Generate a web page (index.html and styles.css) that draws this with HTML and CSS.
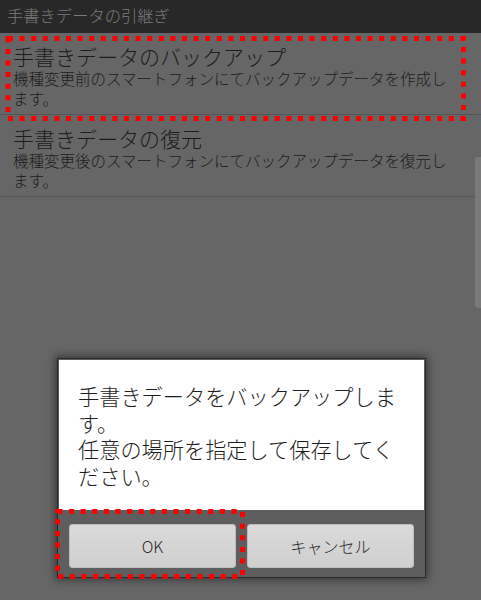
FILE: index.html
```html
<!DOCTYPE html>
<html lang="ja">
<head>
<meta charset="utf-8">
<link rel="stylesheet" href="styles.css">
</head>
<body>
<div class="screen">
  <div class="titlebar">手書きデータの引継ぎ</div>
  <div class="list">
    <div class="item">
      <div class="item-title">手書きデータのバックアップ</div>
      <div class="item-desc">機種変更前のスマートフォンにてバックアップデータを作成し<br>ます。</div>
    </div>
    <div class="item">
      <div class="item-title">手書きデータの復元</div>
      <div class="item-desc">機種変更後のスマートフォンにてバックアップデータを復元し<br>ます。</div>
    </div>
  </div>
  <div class="scrollbar"></div>
  <div class="dialog">
    <div class="dialog-body">
      <div class="dline">手書きデータをバックアップしま</div>
      <div class="dline">す。</div>
      <div class="dline">任意の場所を指定して保存してく</div>
      <div class="dline">ださい。</div>
    </div>
    <div class="dialog-buttons">
      <div class="btn">OK</div>
      <div class="btn">キャンセル</div>
    </div>
  </div>
  <svg class="marks" width="481" height="600" viewBox="0 0 481 600">
    <rect x="8" y="38.5" width="455.5" height="80" fill="none" stroke="#ff0000" stroke-width="5" stroke-dasharray="5 6.6"/>
    <rect x="57.5" y="511.5" width="185" height="65" fill="none" stroke="#ff0000" stroke-width="5" stroke-dasharray="5 6.6"/>
  </svg>
</div>
</body>
</html>
```
FILE: styles.css
```css
html, body {
  margin: 0;
  padding: 0;
}
body {
  background: #666666;
  font-family: "Noto Sans CJK JP", "Noto Sans", sans-serif;
}
.screen {
  position: relative;
  width: 481px;
  height: 600px;
  overflow: hidden;
  background: #666666;
}
.titlebar {
  height: 33px;
  background: #282828;
  color: #7c7c7c;
  font-size: 16.3px;
  font-weight: 300;
  line-height: 31px;
  padding-left: 7px;
  box-sizing: border-box;
}
.list {
  display: flex;
  flex-direction: column;
}
.item {
  padding: 10px 0 6px 13px;
  border-bottom: 1px solid #555555;
  color: #1c1c1c;
  font-weight: 300;
}
.item-title {
  font-size: 21px;
  line-height: 26px;
}
.item-desc {
  font-size: 15.5px;
  line-height: 20px;
  margin-top: -1px;
}
.scrollbar {
  position: absolute;
  right: 0;
  top: 157px;
  width: 6px;
  height: 151px;
  background: #7a7a7a;
  border-radius: 3px 0 0 3px;
}
.dialog {
  position: absolute;
  left: 57px;
  top: 358px;
  width: 369px;
  height: 220px;
  box-sizing: border-box;
  border: 1px solid #2a2a2a;
  padding: 1px;
  background: #5e5e5e;
  box-shadow: 0 0 8px 2px rgba(0, 0, 0, 0.45);
  display: flex;
  flex-direction: column;
}
.dialog-body {
  background: #ffffff;
  height: 150px;
  box-sizing: border-box;
  padding: 23px 19px 0 19px;
  font-size: 21.2px;
  font-weight: 300;
  color: #1e1e1e;
}
.dline {
  height: 26.5px;
  line-height: 26.5px;
  white-space: nowrap;
}
.dialog-buttons {
  flex: 1;
  display: flex;
  gap: 11px;
  padding: 14px 9px 0 10px;
}
.btn {
  width: 167px;
  height: 44px;
  box-sizing: border-box;
  border-radius: 3px;
  background: linear-gradient(#dadada, #cfcfcf);
  border: 1px solid #bdbdbd;
  color: #2a2a2a;
  font-size: 16px;
  font-weight: 300;
  display: flex;
  align-items: center;
  justify-content: center;
}
.marks {
  position: absolute;
  left: 0;
  top: 0;
  pointer-events: none;
}
```
